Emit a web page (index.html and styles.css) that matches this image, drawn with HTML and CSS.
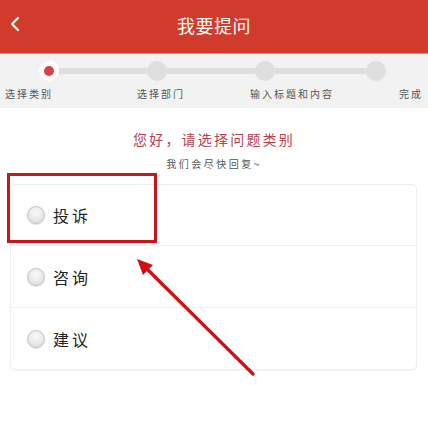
FILE: index.html
```html
<!DOCTYPE html>
<html lang="zh">
<head>
<meta charset="utf-8">
<link rel="stylesheet" href="styles.css">
</head>
<body>
<div class="page">
  <header class="topbar">
    <svg class="back" width="12" height="16" viewBox="0 0 12 16"><polyline points="9,2 3,8 9,14" fill="none" stroke="#fff" stroke-width="2.2" stroke-linecap="round" stroke-linejoin="round"/></svg>
    <h1 class="title">我要提问</h1>
  </header>
  <section class="steps">
    <div class="track">
      <span class="dot active"><span class="inner"></span></span>
      <span class="seg s1"></span>
      <span class="dot"></span>
      <span class="seg s2"></span>
      <span class="dot"></span>
      <span class="seg s3"></span>
      <span class="dot"></span>
    </div>
    <div class="labels">
      <span>选择类别</span>
      <span>选择部门</span>
      <span>输入标题和内容</span>
      <span>完成</span>
    </div>
  </section>
  <section class="intro">
    <p class="greet">您好，请选择问题类别</p>
    <p class="sub">我们会尽快回复~</p>
  </section>
  <ul class="card">
    <li class="row"><span class="radio"></span><span class="label">投诉</span></li>
    <li class="row"><span class="radio"></span><span class="label">咨询</span></li>
    <li class="row"><span class="radio"></span><span class="label">建议</span></li>
  </ul>
  <div class="mark"></div>
  <svg class="arrow" width="428" height="423" viewBox="0 0 428 423">
    <line x1="253" y1="374" x2="146" y2="268" stroke="#d10f0f" stroke-width="3.2" stroke-linecap="round"/>
    <polygon points="137,259 153,265 143,275" fill="#d10f0f"/>
  </svg>
</div>
</body>
</html>
```
FILE: styles.css
```css
* { box-sizing: border-box; }
html, body { margin: 0; padding: 0; background: #fff; }
body { font-family: "Noto Sans CJK SC", "Noto Sans", sans-serif; }
.page { position: relative; width: 428px; height: 423px; overflow: hidden; background: #fff; }

.topbar {
  height: 54px;
  background: #d13b2b;
  border-bottom: 1px solid #e08a80;
  display: flex;
  align-items: center;
  justify-content: center;
  position: relative;
}
.back { position: absolute; left: 9px; top: 16px; }
.title {
  margin: 0;
  color: #fff;
  font-size: 18px;
  font-weight: 400;
  letter-spacing: 0.5px;
  margin-top: -3px;
}

.steps {
  background: #f2f2f2;
  height: 54px;
  padding-top: 7px;
}
.track {
  display: flex;
  align-items: center;
  padding-left: 39px;
  height: 20px;
}
.dot {
  width: 20px; height: 20px;
  border-radius: 50%;
  background: #dedede;
  flex: none;
  display: flex;
  align-items: center;
  justify-content: center;
}
.dot.active { background: #fff; }
.inner { width: 10px; height: 10px; border-radius: 50%; background: #d8404b; }
.seg { height: 6px; background: #dedede; flex: none; }
.s1 { width: 88px; }
.s2 { width: 88px; }
.s3 { width: 91px; }

.labels {
  display: grid;
  grid-template-columns: 132px 113px 149px 1fr;
  padding-left: 5px;
  margin-top: 6px;
  font-size: 10px;
  line-height: 14px;
  letter-spacing: 2px;
  color: #555;
}

.intro { text-align: center; padding-top: 21px; }
.greet {
  margin: 0;
  font-size: 14px;
  line-height: 20px;
  letter-spacing: 2.2px;
  color: #b6424e;
}
.sub {
  margin: 8px 0 0;
  font-size: 10px;
  line-height: 14px;
  letter-spacing: 2.5px;
  color: #555;
}

.card {
  list-style: none;
  margin: 13px 0 0 10px;
  padding: 0;
  width: 407px;
  border: 1px solid #eeeeee;
  border-radius: 5px;
  box-shadow: 0 1px 2px rgba(0,0,0,0.04);
}
.row {
  height: 62px;
  display: flex;
  align-items: center;
  padding-left: 16px;
  border-top: 1px solid #eeeeee;
}
.row:first-child { border-top: none; height: 60px; }
.radio {
  width: 18px; height: 18px;
  border-radius: 50%;
  border: 1px solid #c4c4c4;
  background: radial-gradient(circle at 50% 35%, #fafafa 0%, #e6e6e6 60%, #d2d2d2 100%);
  box-shadow: 0 1px 1px rgba(0,0,0,0.12);
  flex: none;
}
.label {
  margin-left: 8px;
  font-size: 16px;
  letter-spacing: 3px;
  color: #222;
}

.mark {
  position: absolute;
  left: 7px; top: 173px;
  width: 150px; height: 70px;
  border: 3px solid #c8161d;
}
.arrow { position: absolute; left: 0; top: 0; pointer-events: none; }
```
